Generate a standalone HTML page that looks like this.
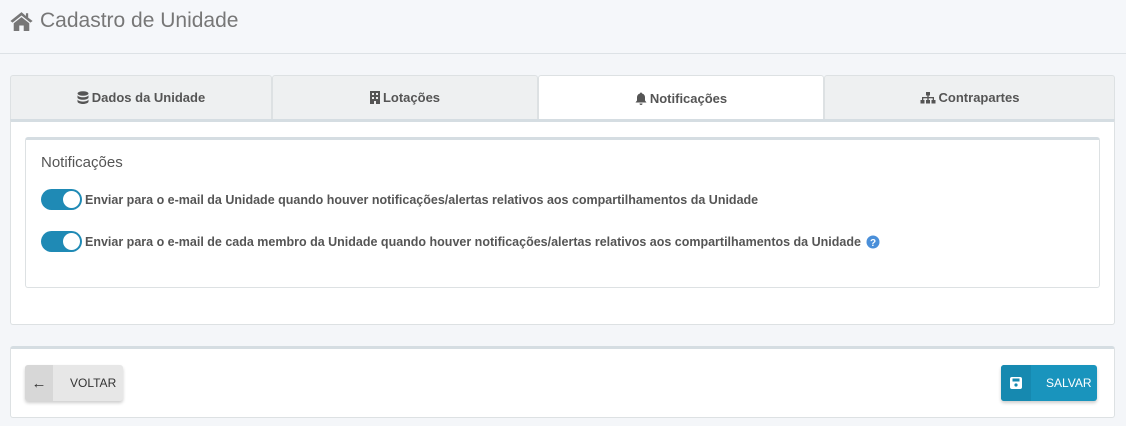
<!DOCTYPE html>
<html><head><meta charset="utf-8"><style>
*{box-sizing:border-box;margin:0;padding:0}
body{width:1126px;height:426px;background:#f4f6f9;font-family:"Liberation Sans",sans-serif;color:#555;position:relative;overflow:hidden}
.hdr{position:absolute;left:0;top:0;width:1126px;height:54px;border-bottom:1px solid #dde2e6;background:#f5f7fa}
.hdr h1{position:absolute;left:9px;top:9px;font-weight:normal;font-size:21px;color:#777;display:flex;align-items:center;gap:6px}
.tab{position:absolute;top:75px;height:44px;background:#eef0f1;border:1px solid #dde1e3;border-bottom:none;border-radius:3px 3px 0 0;display:flex;align-items:center;justify-content:center;font-size:13px;font-weight:bold;color:#555;gap:3px}
.tab.act{background:#fff;height:45px}
.panel{position:absolute;left:10px;top:119px;width:1105px;height:206px;background:#fff;border:1px solid #dde1e3;border-top:3px solid #d5dde2;border-radius:0 0 3px 3px}
.inner{position:absolute;left:14px;top:15px;width:1075px;height:151px;border:1px solid #dde1e3;border-top:3px solid #d5dde2;border-radius:3px}
.inner h3{position:absolute;left:15px;top:14px;font-weight:normal;font-size:15px;color:#555}
.row{position:absolute;left:15px;display:flex;align-items:center;font-size:12.5px;font-weight:bold;color:#555;gap:3px}
.sw{width:41px;height:21px;border-radius:11px;background:#1f8ab5;position:relative}
.sw:after{content:"";position:absolute;right:2px;top:2px;width:17px;height:17px;border-radius:50%;background:#fff}
.foot{position:absolute;left:10px;top:346px;width:1105px;height:72px;background:#fff;border:1px solid #dde1e3;border-top:3px solid #d5dde2;border-radius:3px}
.btn{position:absolute;top:16px;height:36px;border-radius:3px;display:flex;align-items:center;font-size:12px;box-shadow:0 2px 3px rgba(0,0,0,.2)}
</style></head><body>
<div class="hdr"><h1><svg width="25" height="20" viewBox="0 0 22 18"><path d="M11 1 L1 9 L3 10.5 L11 4 L19 10.5 L21 9 L17 6 V2 H15 V4.5 Z" fill="#777"/><path d="M4 11 L11 5.5 L18 11 V18 H13 V13 H9 V18 H4 Z" fill="#777"/></svg>Cadastro de Unidade</h1></div>
<div class="tab" style="left:10px;width:262px"><svg width="12" height="13" viewBox="0 0 12 13"><ellipse cx="6" cy="2.5" rx="5.5" ry="2.3" fill="#555"/><path d="M.5 4v2.5c0 1.3 2.5 2.3 5.5 2.3s5.5-1 5.5-2.3V4c0 1.3-2.5 2.3-5.5 2.3S.5 5.3.5 4zM.5 8.3v2.2C.5 11.8 3 13 6 13s5.5-1.2 5.5-2.5V8.3c0 1.3-2.5 2.3-5.5 2.3S.5 9.6.5 8.3z" fill="#555"/></svg>Dados da Unidade</div>
<div class="tab" style="left:272px;width:266px"><svg width="10" height="13"><rect width="10" height="13" fill="#555"/><g fill="#eee"><rect x="2" y="2" width="2" height="2"/><rect x="6" y="2" width="2" height="2"/><rect x="2" y="6" width="2" height="2"/><rect x="6" y="6" width="2" height="2"/><rect x="4" y="10" width="2" height="3"/></g></svg>Lotações</div>
<div class="tab act" style="left:538px;width:286px"><svg width="12" height="13" viewBox="0 0 12 13"><path d="M6 0.5c.6 0 1 .4 1 1 2 .5 3 2 3 4v3l1.5 2H.5L2 8.5v-3c0-2 1-3.5 3-4 0-.6.4-1 1-1zM4.5 11.5h3a1.5 1.5 0 0 1-3 0z" fill="#555"/></svg>Notificações</div>
<div class="tab" style="left:824px;width:291px"><svg width="16" height="12" viewBox="0 0 16 12"><g fill="#555"><rect x="6" y="0" width="4" height="3.5"/><rect x="7.3" y="3.5" width="1.4" height="2"/><rect x="2" y="5" width="12" height="1.3"/><rect x="2" y="5" width="1.3" height="3"/><rect x="12.7" y="5" width="1.3" height="3"/><rect x="7.3" y="5" width="1.4" height="3"/><rect x="0.5" y="8" width="4" height="3.5"/><rect x="6" y="8" width="4" height="3.5"/><rect x="11.5" y="8" width="4" height="3.5"/></g></svg>Contrapartes</div>
<div class="panel"><div class="inner">
<h3>Notificações</h3>
<div class="row" style="top:49px"><div class="sw"></div>Enviar para o e-mail da Unidade quando houver notificações/alertas relativos aos compartilhamentos da Unidade</div>
<div class="row" style="top:91px"><div class="sw"></div>Enviar para o e-mail de cada membro da Unidade quando houver notificações/alertas relativos aos compartilhamentos da Unidade <svg width="14" height="14" style="margin-left:2px"><circle cx="7" cy="7" r="6.5" fill="#4a8fd9"/><text x="7" y="11" font-size="10" font-weight="bold" fill="#fff" text-anchor="middle" font-family="Liberation Sans">?</text></svg></div>
</div></div>
<div class="foot">
<div class="btn" style="left:14px;width:98px;background:#e7e7e7;color:#333"><div style="width:28px;height:36px;background:#d7d7d7;border-radius:3px 0 0 3px;display:flex;align-items:center;justify-content:center;font-size:15px;font-weight:bold">←</div><span style="margin-left:17px">VOLTAR</span></div>
<div class="btn" style="left:990px;width:96px;background:#1994bd;color:#fff"><div style="width:30px;height:36px;background:#1689b0;border-radius:3px 0 0 3px;display:flex;align-items:center;justify-content:center"><svg width="12" height="12"><rect width="12" height="12" rx="2" fill="#fff"/><rect x="2.5" y="1.5" width="7" height="3" fill="#1689b0"/><circle cx="6" cy="8" r="1.6" fill="#1689b0"/></svg></div><span style="margin-left:15px">SALVAR</span></div>
</div>
</body></html>
